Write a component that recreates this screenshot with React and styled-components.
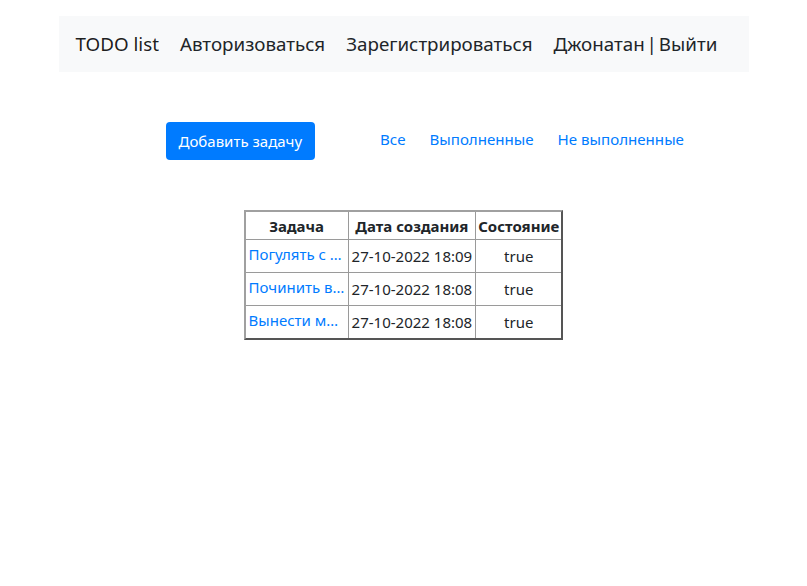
import React from 'react';
import styled, { createGlobalStyle } from 'styled-components';

const GlobalStyle = createGlobalStyle`
  body {
    margin: 0;
    background: #fff;
    font-family: "Noto Sans", "Open Sans", sans-serif;
    color: #212529;
  }
`;

const Page = styled.div`
  width: 690px;
  margin: 0 auto;
  padding-top: 16px;
`;

const Navbar = styled.nav`
  height: 56px;
  background: #f8f9fa;
  display: flex;
  align-items: center;
  gap: 21px;
  padding: 0 17px;
  box-sizing: border-box;
`;

const NavItem = styled.a`
  font-size: 18.8px;
  color: ${(p) => (p.$brand ? 'rgba(0,0,0,.9)' : '#212529')};
  text-decoration: none;
  white-space: nowrap;
  word-spacing: ${(p) => (p.$tight ? '-3px' : 'normal')};
`;

const Toolbar = styled.div`
  display: flex;
  align-items: center;
  margin-top: 50px;
  padding-left: 107px;
`;

const AddButton = styled.button`
  height: 38px;
  padding: 0 13px;
  border: none;
  border-radius: 4px;
  background: #007bff;
  color: #fff;
  font-family: inherit;
  font-size: 15px;
  cursor: pointer;
`;

const Filters = styled.div`
  display: flex;
  gap: 24px;
  margin-left: 65px;
  margin-top: -4px;
`;

const FilterLink = styled.a`
  color: #007bff;
  font-size: 15.1px;
  text-decoration: none;
`;

const Table = styled.table`
  margin: 50px auto 0;
  border-collapse: separate;
  border-spacing: 0;
  border: 2px solid;
  border-color: #a0a0a0 #555 #555 #a0a0a0;
  font-size: 15px;
`;

const cellBorders = `
  border-right: 1px solid #9a9a9a;
  border-bottom: 1px solid #9a9a9a;
  &:last-child { border-right: none; }
`;

const Th = styled.th`
  ${cellBorders}
  font-weight: 700;
  height: 27px;
  padding: 0 2px;
  white-space: nowrap;
`;

const Row = styled.tr`
  &:last-child td { border-bottom: none; }
`;

const Td = styled.td`
  ${cellBorders}
  height: 32px;
  padding: 0 3px;
  text-align: ${(p) => p.$align || 'left'};
  white-space: nowrap;
`;

const TaskLink = styled.a`
  display: block;
  width: 96px;
  color: #007bff;
  text-decoration: none;
  overflow: hidden;
  text-overflow: ellipsis;
  white-space: nowrap;
  margin-top: -4px;
`;

const tasks = [
  { title: 'Погулять с собакой', date: '27-10-2022 18:09', done: 'true' },
  { title: 'Починить велосипед', date: '27-10-2022 18:08', done: 'true' },
  { title: 'Вынести мусор', date: '27-10-2022 18:08', done: 'true' },
];

const App = () => {
  return (
    <>
      <GlobalStyle />
      <Page>
        <Navbar>
          <NavItem $brand href="#">TODO list</NavItem>
          <NavItem href="#">Авторизоваться</NavItem>
          <NavItem href="#">Зарегистрироваться</NavItem>
          <NavItem $tight href="#">Джонатан | Выйти</NavItem>
        </Navbar>
        <Toolbar>
          <AddButton>Добавить задачу</AddButton>
          <Filters>
            <FilterLink href="#">Все</FilterLink>
            <FilterLink href="#">Выполненные</FilterLink>
            <FilterLink href="#">Не выполненные</FilterLink>
          </Filters>
        </Toolbar>
      </Page>
      <Table>
        <thead>
          <tr>
            <Th>Задача</Th>
            <Th>Дата создания</Th>
            <Th>Состояние</Th>
          </tr>
        </thead>
        <tbody>
          {tasks.map((t, i) => (
            <Row key={i}>
              <Td><TaskLink href="#">{t.title}</TaskLink></Td>
              <Td>{t.date}</Td>
              <Td $align="center">{t.done}</Td>
            </Row>
          ))}
        </tbody>
      </Table>
    </>
  );
};

export default App;
